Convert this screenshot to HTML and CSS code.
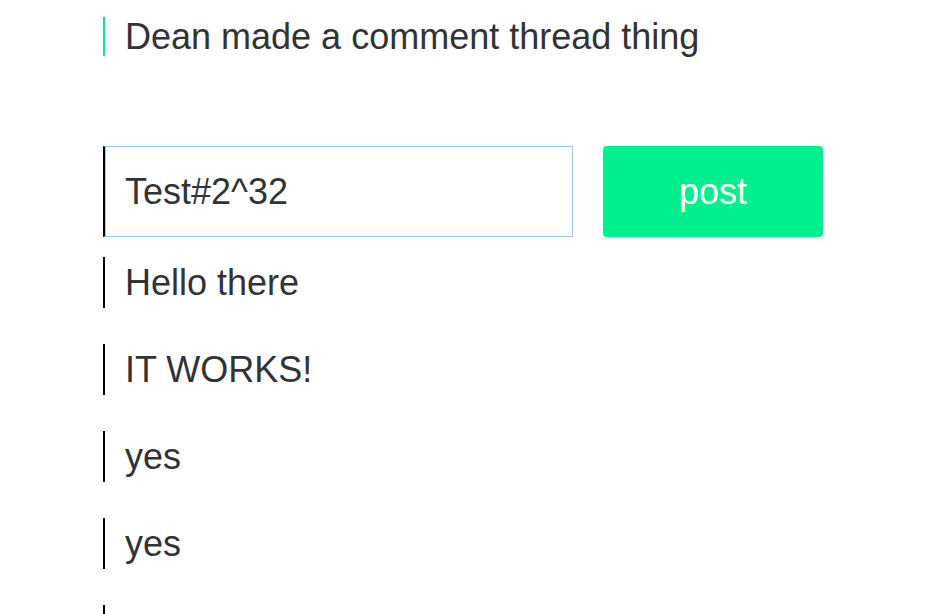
FILE: index.html
```html
<!DOCTYPE html>
<html>
<head>
<meta charset="utf-8">
<link rel="stylesheet" href="styles.css">
</head>
<body>
<div class="page">
  <p class="title">Dean made a comment thread thing</p>
  <form class="form">
    <input class="input" type="text" value="Test#2^32">
    <button class="button" type="button">post</button>
  </form>
  <div class="comments">
    <p class="comment">Hello there</p>
    <p class="comment">IT WORKS!</p>
    <p class="comment">yes</p>
    <p class="comment">yes</p>
    <p class="comment">yes</p>
  </div>
</div>
</body>
</html>
```
FILE: styles.css
```css
html, body {
  margin: 0;
  padding: 0;
  background: #fff;
  overflow: hidden;
}
body {
  font-family: "Liberation Sans", Arial, sans-serif;
  color: #333;
}
.page {
  padding: 17px 0 0 103px;
}
.title {
  margin: 0;
  border-left: 2px solid #00ee90;
  padding-left: 20px;
  font-size: 36px;
  line-height: 39px;
}
.form {
  display: flex;
  gap: 30px;
  margin: 90px 0 0 0;
}
.input {
  box-sizing: border-box;
  width: 470px;
  height: 91px;
  margin: 0;
  border: 1px solid #a3c2f5;
  border-left: 2px solid #000;
  box-shadow: inset 1px 0 0 #a3c2f5;
  padding: 0 0 0 20px;
  font-family: "Liberation Sans", Arial, sans-serif;
  font-size: 36px;
  color: #333;
  outline: none;
}
.button {
  width: 220px;
  height: 91px;
  margin: 0;
  border: none;
  border-radius: 4px;
  background: #00f08f;
  color: #fff;
  font-family: "Liberation Sans", Arial, sans-serif;
  font-size: 36px;
  padding: 0;
}
.comments {
  display: flex;
  flex-direction: column;
  gap: 36px;
  margin-top: 20px;
}
.comment {
  margin: 0;
  border-left: 2px solid #000;
  padding-left: 20px;
  font-size: 36px;
  line-height: 51px;
}
```
